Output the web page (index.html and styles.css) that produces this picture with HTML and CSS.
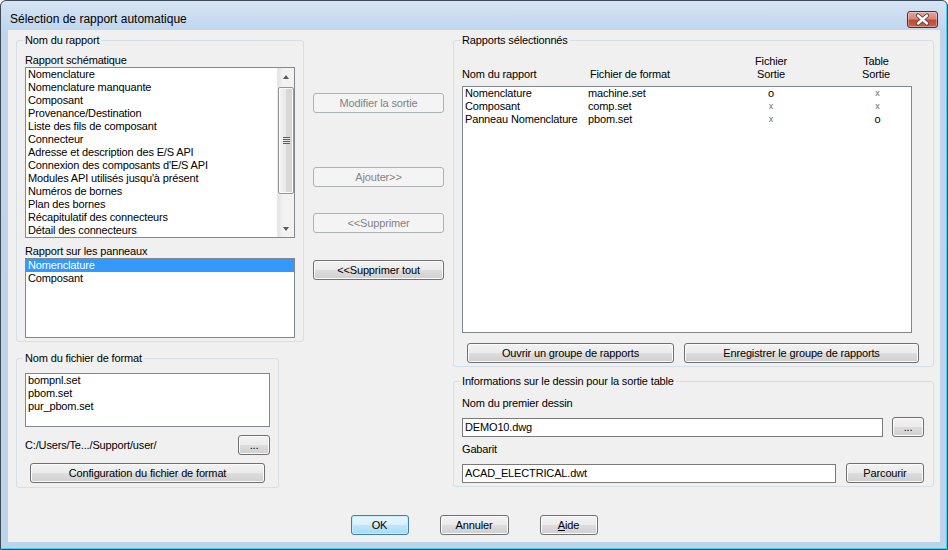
FILE: index.html
```html
<!DOCTYPE html>
<html lang="fr">
<head>
    <meta charset="UTF-8">
    <title>Sélection de rapport automatique</title>
    <link rel="stylesheet" href="styles.css">
</head>
<body>
    <div class="window">
        <div class="titlebar">
            <span class="title">Sélection de rapport automatique</span>
            <div class="close-btn">
                <svg width="31" height="17" viewBox="0 0 31 17">
                    <path d="M11 4.5 L20 12.5 M20 4.5 L11 12.5" stroke="#5a3a3a" stroke-width="4.2" stroke-linecap="round" fill="none"/>
                    <path d="M11 4.5 L20 12.5 M20 4.5 L11 12.5" stroke="#ffffff" stroke-width="2.4" stroke-linecap="round" fill="none"/>
                </svg>
            </div>
        </div>

        <div class="client">
            <div class="main">
                <!-- Left column -->
                <div class="col-left">
                    <fieldset class="group group-report">
                        <legend>Nom du rapport</legend>
                        <div class="field-label">Rapport schématique</div>
                        <div class="listbox list-schema">
                            <ul class="items">
                                <li>Nomenclature</li>
                                <li>Nomenclature manquante</li>
                                <li>Composant</li>
                                <li>Provenance/Destination</li>
                                <li>Liste des fils de composant</li>
                                <li>Connecteur</li>
                                <li>Adresse et description des E/S API</li>
                                <li>Connexion des composants d'E/S API</li>
                                <li>Modules API utilisés jusqu'à présent</li>
                                <li>Numéros de bornes</li>
                                <li>Plan des bornes</li>
                                <li>Récapitulatif des connecteurs</li>
                                <li>Détail des connecteurs</li>
                            </ul>
                            <div class="scrollbar">
                                <div class="sb-arrow"><span class="arrow-up"></span></div>
                                <div class="sb-track">
                                    <div class="sb-thumb"><span class="grip"></span></div>
                                </div>
                                <div class="sb-arrow"><span class="arrow-down"></span></div>
                            </div>
                        </div>
                        <div class="field-label">Rapport sur les panneaux</div>
                        <div class="listbox list-panel">
                            <ul class="items">
                                <li class="selected">Nomenclature</li>
                                <li>Composant</li>
                            </ul>
                        </div>
                    </fieldset>

                    <fieldset class="group group-format">
                        <legend>Nom du fichier de format</legend>
                        <div class="listbox list-format">
                            <ul class="items">
                                <li>bompnl.set</li>
                                <li>pbom.set</li>
                                <li>pur_pbom.set</li>
                            </ul>
                        </div>
                        <div class="path-row">
                            <span>C:/Users/Te.../Support/user/</span>
                            <button class="btn btn-dots">...</button>
                        </div>
                        <button class="btn btn-config">Configuration du fichier de format</button>
                    </fieldset>
                </div>

                <!-- Middle column -->
                <div class="col-mid">
                    <button class="btn btn-mid btn-modify" disabled>Modifier la sortie</button>
                    <button class="btn btn-mid btn-add" disabled>Ajouter&gt;&gt;</button>
                    <button class="btn btn-mid btn-remove" disabled>&lt;&lt;Supprimer</button>
                    <button class="btn btn-mid btn-remove-all">&lt;&lt;Supprimer tout</button>
                </div>

                <!-- Right column -->
                <div class="col-right">
                    <fieldset class="group group-selected">
                        <legend>Rapports sélectionnés</legend>
                        <div class="sel-header">
                            <div>Nom du rapport</div>
                            <div>Fichier de format</div>
                            <div class="center">Fichier<br>Sortie</div>
                            <div class="center">Table<br>Sortie</div>
                        </div>
                        <div class="listbox list-selected">
                            <div class="sel-row">
                                <div>Nomenclature</div>
                                <div>machine.set</div>
                                <div class="center mark-o">o</div>
                                <div class="center mark-x">x</div>
                            </div>
                            <div class="sel-row">
                                <div>Composant</div>
                                <div>comp.set</div>
                                <div class="center mark-x">x</div>
                                <div class="center mark-x">x</div>
                            </div>
                            <div class="sel-row">
                                <div>Panneau Nomenclature</div>
                                <div>pbom.set</div>
                                <div class="center mark-x">x</div>
                                <div class="center mark-o">o</div>
                            </div>
                        </div>
                        <div class="group-buttons">
                            <button class="btn btn-open">Ouvrir un groupe de rapports</button>
                            <button class="btn btn-save">Enregistrer le groupe de rapports</button>
                        </div>
                    </fieldset>

                    <fieldset class="group group-drawing">
                        <legend>Informations sur le dessin pour la sortie table</legend>
                        <div class="field-label">Nom du premier dessin</div>
                        <div class="input-row">
                            <input type="text" class="textbox textbox-drawing" value="DEMO10.dwg">
                            <button class="btn btn-dots-2">...</button>
                        </div>
                        <div class="field-label label-template">Gabarit</div>
                        <div class="input-row">
                            <input type="text" class="textbox textbox-template" value="ACAD_ELECTRICAL.dwt">
                            <button class="btn btn-browse">Parcourir</button>
                        </div>
                    </fieldset>
                </div>
            </div>

            <div class="footer">
                <button class="btn btn-default btn-ok">OK</button>
                <button class="btn btn-cancel">Annuler</button>
                <button class="btn btn-help"><u>A</u>ide</button>
            </div>
        </div>
    </div>
</body>
</html>
```

FILE: styles.css
```css
* {
    box-sizing: border-box;
}

body {
    margin: 0;
    font-family: "Liberation Sans", Arial, sans-serif;
    font-size: 11px;
    letter-spacing: -0.15px;
    color: #000;
    background-color: #fff;
}

/* Window frame */
.window {
    width: 948px;
    height: 550px;
    border: 1px solid #3d4b5c;
    border-radius: 6px 6px 0 0;
    padding: 0 7px 7px 7px;
    background: linear-gradient(to bottom, #d6e4f3 0, #bed5ec 30px, #bcd3ea 100%);
    box-shadow: inset -1px -1px 0 #3fd3ee;
}

.titlebar {
    height: 29px;
    display: flex;
    align-items: flex-start;
    justify-content: space-between;
    padding: 9px 2px 0 2px;
}

.title {
    font-size: 12px;
    line-height: 18px;
    letter-spacing: 0;
    color: #000;
}

.close-btn {
    width: 31px;
    height: 17px;
    border: 1px solid #5b2a25;
    border-radius: 3px;
    background: linear-gradient(to bottom, #e3a699 0, #d98677 45%, #c1493a 55%, #c7614f 100%);
    box-shadow: inset 0 0 0 1px rgba(255, 255, 255, 0.35);
    margin-top: 1px;
}

.close-btn svg {
    display: block;
    margin: -1px 0 0 -1px;
}

.client {
    width: 932px;
    height: 512px;
    background-color: #f0f0f0;
}

.main {
    display: flex;
    align-items: flex-start;
    padding-top: 4px;
}

/* Group boxes */
.group {
    margin: 0;
    padding: 0 8px;
    border: 1px solid #d5dfe5;
    border-radius: 3px;
    min-width: 0;
}

.group legend {
    padding: 0 2px;
    margin-left: -2px;
    line-height: 13px;
}

.field-label {
    line-height: 13px;
    margin-top: 7px;
}

/* List boxes */
.listbox {
    background-color: #fff;
    border: 1px solid #828790;
    overflow: hidden;
}

.items {
    list-style: none;
    margin: 0;
    padding: 0;
}

.items li {
    line-height: 13px;
    height: 13px;
    padding-left: 2px;
    white-space: nowrap;
}

.items li.selected {
    background-color: #3399ff;
    color: #fff;
}

/* Left column */
.col-left {
    margin-left: 8px;
    width: 288px;
}

.group-report {
    width: 288px;
    padding-bottom: 3px;
}

.list-schema {
    height: 171px;
    display: flex;
}

.list-schema .items {
    flex: 1;
}

.list-panel {
    height: 80px;
}

.scrollbar {
    width: 17px;
    display: flex;
    flex-direction: column;
    background: linear-gradient(to right, #e3e3e3 0, #f2f2f2 30%, #f2f2f2 100%);
    border-left: 1px solid #e8e8e8;
}

.sb-arrow {
    height: 17px;
    display: flex;
    align-items: center;
    justify-content: center;
}

.arrow-up {
    width: 0;
    height: 0;
    border-left: 3.5px solid transparent;
    border-right: 3.5px solid transparent;
    border-bottom: 4px solid #5a5a5a;
}

.arrow-down {
    width: 0;
    height: 0;
    border-left: 3.5px solid transparent;
    border-right: 3.5px solid transparent;
    border-top: 4px solid #5a5a5a;
}

.sb-track {
    flex: 1;
    padding-top: 2px;
}

.sb-thumb {
    height: 107px;
    border: 1px solid #979797;
    border-radius: 2px;
    background: linear-gradient(to right, #f4f4f4 0, #e8e8e8 50%, #d9d9d9 51%, #d6d6d6 100%);
    box-shadow: inset 0 0 0 1px #f9f9f9;
    display: flex;
    align-items: center;
    justify-content: center;
}

.grip {
    display: block;
    width: 7px;
    height: 7px;
    background: repeating-linear-gradient(to bottom, #5f5f5f 0, #5f5f5f 1px, #e6e6e6 1px, #e6e6e6 2px);
}

.group-format {
    width: 263px;
    margin-top: 10px;
    padding-bottom: 4px;
}

.list-format {
    height: 54px;
    margin-top: 8px;
}

.path-row {
    margin-top: 8px;
    display: flex;
    align-items: center;
    justify-content: space-between;
}

/* Buttons */
.btn {
    height: 20px;
    padding: 0;
    font-family: "Liberation Sans", Arial, sans-serif;
    font-size: 11px;
    letter-spacing: -0.15px;
    color: #000;
    border: 1px solid #707070;
    border-radius: 3px;
    background: linear-gradient(to bottom, #f2f2f2 0, #ebebeb 50%, #dddddd 51%, #cfcfcf 100%);
    box-shadow: inset 0 0 0 1px #fbfbfb;
    cursor: pointer;
}

.btn:disabled {
    color: #838383;
    border-color: #adb2b5;
    background: #f4f4f4;
    box-shadow: none;
}

.btn-default {
    border-color: #3c7fb1;
    background: linear-gradient(to bottom, #eaf6fd 0, #d9f0fc 50%, #bee6fd 51%, #a7d9f5 100%);
    box-shadow: inset 0 0 0 1px #c5ecfc;
}

.btn-dots {
    width: 32px;
}

.btn-config {
    display: block;
    width: 235px;
    margin: 8px 0 0 5px;
}

/* Middle column */
.col-mid {
    margin-left: 9px;
    width: 131px;
    display: flex;
    flex-direction: column;
}

.btn-mid {
    width: 131px;
}

.btn-modify {
    margin-top: 59px;
}

.btn-add {
    margin-top: 54px;
}

.btn-remove {
    margin-top: 26px;
}

.btn-remove-all {
    margin-top: 27px;
}

/* Right column */
.col-right {
    margin-left: 9px;
    width: 481px;
}

.group-selected {
    width: 481px;
    padding-bottom: 3px;
}

.sel-header {
    margin-top: 8px;
    display: grid;
    grid-template-columns: 128px 145px 72px 100px;
    align-items: end;
    line-height: 13px;
}

.sel-header div:nth-child(4) {
    padding-left: 38px;
}

.center {
    text-align: center;
}

.list-selected {
    width: 450px;
    height: 247px;
    margin-top: 5px;
    padding-left: 2px;
}

.sel-row {
    display: grid;
    grid-template-columns: 123px 147px 72px 100px;
    line-height: 13px;
    white-space: nowrap;
}

.sel-row div:nth-child(4) {
    padding-left: 41px;
}

.mark-x {
    color: #6a6a6a;
    font-size: 9px;
}

.group-buttons {
    margin-top: 10px;
    display: flex;
}

.btn-open {
    width: 207px;
    margin-left: 5px;
}

.btn-save {
    width: 235px;
    margin-left: 10px;
}

.group-drawing {
    width: 481px;
    margin-top: 8px;
    padding: 0 9px 3px 8px;
}

.group-drawing .field-label {
    margin-top: 9px;
}

.group-drawing .label-template {
    margin-top: 6px;
}

.input-row {
    margin-top: 7px;
    display: flex;
    align-items: center;
    justify-content: space-between;
}

.textbox {
    height: 19px;
    margin: 0;
    padding: 0 2px;
    border: 1px solid #7a7a7a;
    font-family: "Liberation Sans", Arial, sans-serif;
    font-size: 11px;
    letter-spacing: -0.15px;
    color: #000;
    background-color: #fff;
    outline: none;
}

.textbox-drawing {
    width: 421px;
}

.textbox-template {
    width: 374px;
}

.btn-dots-2 {
    width: 32px;
}

.btn-browse {
    width: 78px;
}

/* Footer */
.footer {
    margin-top: 27px;
    display: flex;
    justify-content: center;
    gap: 31px;
}

.btn-ok {
    width: 58px;
}

.btn-cancel {
    width: 69px;
}

.btn-help {
    width: 58px;
}
```
